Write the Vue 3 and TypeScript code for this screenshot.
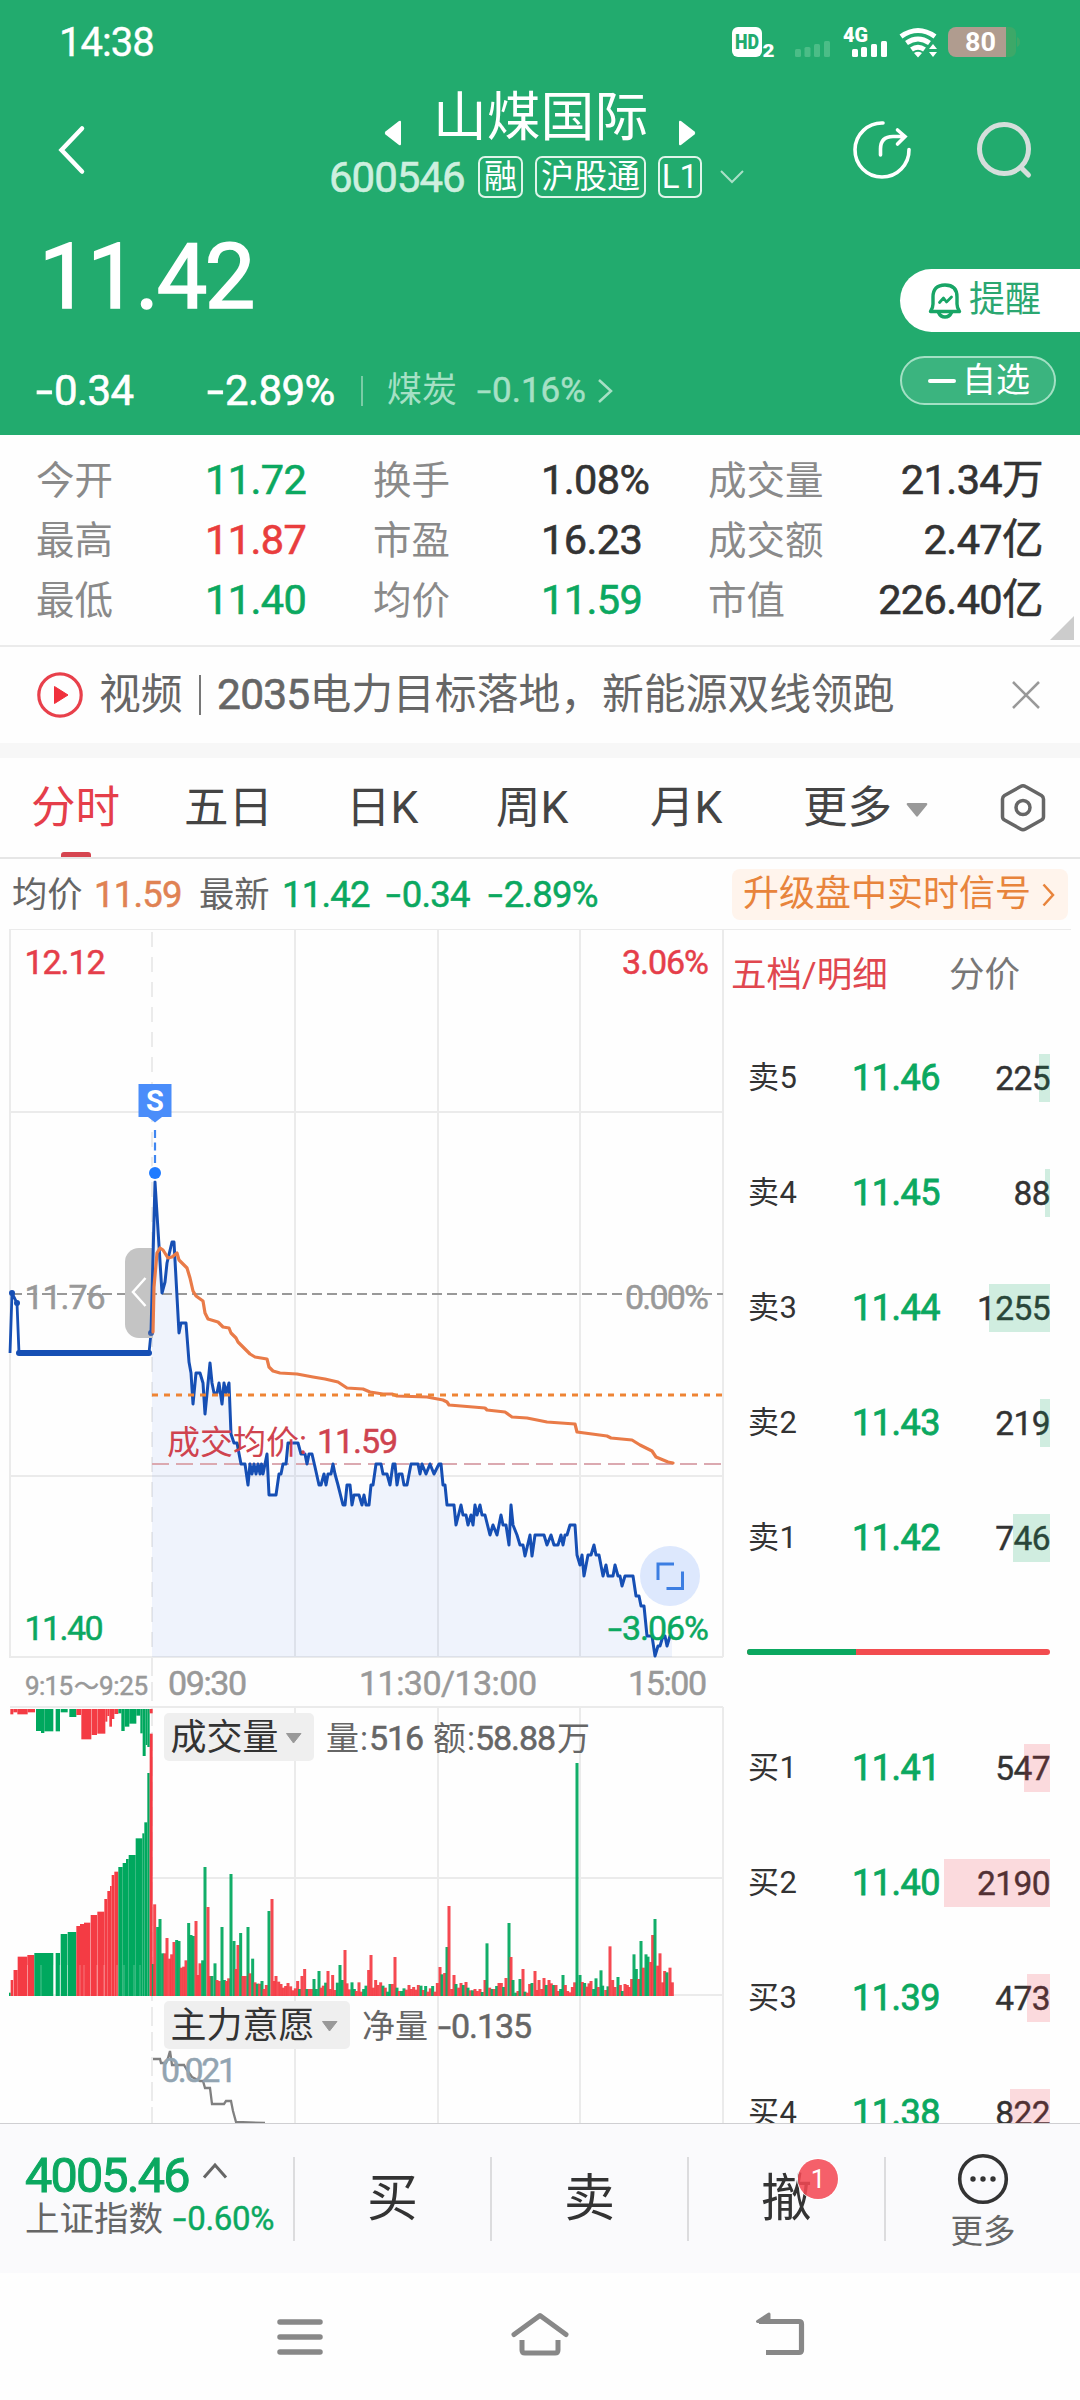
<script setup lang="ts">
import { h } from 'vue'

interface Level { name: string; price: string; volume: number; bar: number }
type Bar = { x: number; top: number; color: string }

const GREEN = '#00a85e'
const RED = '#f43b44'

// Numeric text: the minus sign is drawn wider than the font's own hyphen.
const Num = (props: { v: string }) =>
  h('span', { class: 'num' }, props.v.startsWith('-') ? [h('i', { class: 'neg' }, '-'), props.v.slice(1)] : props.v)
Num.props = ['v']

const stats = [
  [['今开', '11.72', 'down'], ['换手', '1.08%', ''], ['成交量', '21.34万', '']],
  [['最高', '11.87', 'up'], ['市盈', '16.23', ''], ['成交额', '2.47亿', '']],
  [['最低', '11.40', 'down'], ['均价', '11.59', 'down'], ['市值', '226.40亿', '']],
]

const tabs = ['分时', '五日', '日K', '周K', '月K']

const asks: Level[] = [
  { name: '卖5', price: '11.46', volume: 225, bar: 11 },
  { name: '卖4', price: '11.45', volume: 88, bar: 5 },
  { name: '卖3', price: '11.44', volume: 1255, bar: 61 },
  { name: '卖2', price: '11.43', volume: 219, bar: 10 },
  { name: '卖1', price: '11.42', volume: 746, bar: 37 },
]
const bids: Level[] = [
  { name: '买1', price: '11.41', volume: 547, bar: 26 },
  { name: '买2', price: '11.40', volume: 2190, bar: 106 },
  { name: '买3', price: '11.39', volume: 473, bar: 23 },
  { name: '买4', price: '11.38', volume: 822, bar: 40 },
]

const pricePts =
  '151,1333 155,1182 158,1230 162,1293 165,1282 167,1263 172,1242 174,1242 179,1333 181,1323 186,1323 189,1362 191,1373 193,1404 196,1373 200,1373 203,1383 205,1414 210,1363 212,1383 214,1393 217,1393 219,1383 222,1404 224,1383 226,1393 229,1383 231,1434 234,1443 237,1443 241,1464 245,1464 248,1485 250,1464 252,1474 254,1464 256,1474 258,1464 260,1474 261.5,1464 263,1474 265,1464 267,1454 269,1495 276,1495 279,1474 281,1474 283,1464 286,1464 288,1443 298,1443 301,1454 305,1454 307,1464 309,1454 312,1454 315,1467 319,1485 321,1485 324,1474 326,1485 328,1474 331,1474 333,1464 335,1474 338,1485 343,1505 345,1505 347,1485 350,1485 352,1505 354,1495 359,1495 362,1505 364,1495 366,1505 369,1505 371,1485 373,1485 376,1464 381,1464 383,1474 387,1474 390,1485 393,1464 395,1464 397,1485 399,1474 402,1474 404,1485 407,1485 411,1464 418,1464 420,1474 422,1464 426,1474 430,1464 434,1474 439,1464 441,1464 443,1485 445,1485 447,1505 454,1505 456,1525 461,1505 463,1515 466,1515 468,1525 471,1515 473,1525 475,1505 477,1515 480,1505 482,1515 485,1515 490,1535 493,1525 497,1535 501,1515 503,1525 506,1525 509,1545 511,1505 513,1525 517,1535 520,1545 523,1545 525,1556 530,1535 532,1556 535,1535 544,1535 547,1545 551,1535 554,1545 558,1545 561,1535 563,1545 565,1535 567,1535 570,1525 575,1525 577,1555 580,1565 582,1555 584,1576 588,1555 591,1555 594,1545 596,1555 599,1555 603,1576 606,1565 608,1576 613,1576 615,1565 618,1576 620,1576 622,1586 625,1576 633,1576 636,1596 639,1596 641,1606 644,1606 647,1636 652,1636 655,1656 658,1646 660,1646 663,1636 665,1636 667,1646 670,1636 672,1636'
const areaPts = `152,1657 ${pricePts.replace('151,1333', '152,1333')} 672,1657`
const auctionPts = '10,1353 12,1293 17,1303 19,1353 149,1353 151,1333'
const avgPts =
  '153,1332 154,1287 157,1253 160,1248 163,1250 168,1258 172,1257 177,1253 179,1260 187,1268 190,1278 193,1291 196,1296 203,1301 205,1313 208,1319 218,1322 223,1327 229,1328 231,1333 236,1338 238,1342 250,1354 255,1357 267,1359 269,1367 273,1371 280,1373 297,1374 313,1377 325,1379 338,1382 347,1388 363,1389 370,1392 383,1394 392,1394 397,1396 427,1397 443,1400 447,1402 449,1405 485,1408 487,1410 505,1412 512,1417 527,1418 547,1422 575,1424 577,1432 607,1436 611,1438 632,1440 640,1445 652,1451 656,1457 668,1462 673,1463'
const willPts =
  '153,2059 160,2059 161,2063 166,2063 168,2058 170,2051 172,2065 184,2065 187,2070 192,2077 200,2081 203,2081 205,2088 210,2088 212,2104 224,2104 226,2101 231,2101 233,2111 236,2122 265,2123'

const parseBars = (src: string): Bar[] =>
  src.split(' ').map((item) => {
    const [x, top] = item.slice(1).split(',').map(Number)
    return { x: x / 3, top: 1690 + top / 3, color: item[0] === 'g' ? GREEN : RED }
  })

// Per-minute volume: colour flag, offset and bar top, in thirds of a pixel.
const volume = parseBars(
  'g460,822 r464,643 g473,711 g480,687 g488,790 r495,790 r501,744 r509,806 r515,793 r522,756 g530,750 g537,753 r544,833 r551,830 r558,811 g566,699 g573,735 g580,738 r588,693 r594,855 r600,820 g608,811 g615,531 r624,651 r630,858 g636,858 g645,820 r651,870 r658,873 g666,711 g673,870 r680,873 r686,865 g693,552 g702,753 r708,837 r714,765 g722,729 r729,858 r736,858 g744,711 r750,850 g758,806 r765,877 g772,881 r779,881 g786,873 r792,897 r799,885 g807,663 r816,627 r823,873 r828,858 r836,875 r843,882 r850,893 r857,888 r864,879 r872,889 r879,901 r886,895 r893,873 g899,897 r906,858 r914,837 g921,897 r928,897 r935,897 g942,867 g949,897 g957,843 r963,893 r970,887 g977,878 r984,843 r991,897 r998,855 r1005,900 g1012,878 g1020,825 g1027,870 r1035,780 r1041,880 r1048,898 g1056,877 g1063,897 r1069,903 r1077,877 r1084,905 g1091,897 g1098,887 r1106,840 r1113,795 r1120,893 r1127,870 r1134,885 r1142,877 g1149,887 r1156,893 g1163,905 g1170,882 r1177,882 r1185,801 g1191,893 r1198,903 g1205,903 g1212,895 r1219,899 r1227,885 r1234,897 r1241,891 r1248,899 r1255,885 g1263,887 r1270,900 g1277,888 r1284,905 r1291,895 g1298,888 r1305,905 r1312,879 r1320,831 g1326,853 r1334,849 g1341,771 r1347,648 r1355,897 r1362,855 g1368,882 r1376,893 r1383,879 g1390,885 r1398,876 g1404,893 r1411,901 g1418,901 r1425,897 r1432,903 r1440,897 g1447,906 r1455,870 g1461,760 r1469,893 g1476,897 r1483,897 g1490,888 r1497,879 r1504,879 g1511,891 r1518,864 g1527,699 r1533,801 g1539,870 g1547,908 r1554,903 g1560,867 r1569,837 g1575,905 r1582,908 r1589,882 g1596,879 r1605,843 r1611,900 r1617,870 r1625,897 r1632,864 g1639,885 r1647,870 r1654,880 g1661,885 r1668,885 r1675,903 g1682,897 g1689,855 r1696,885 r1703,903 r1710,907 r1717,891 r1724,877 g1731,219 g1740,855 r1747,876 g1754,879 r1761,890 r1767,880 r1773,873 g1781,897 g1788,865 r1795,891 g1803,841 g1808,887 r1817,900 g1824,889 r1830,769 r1838,870 r1845,891 g1854,861 r1861,885 g1867,903 r1875,882 r1882,885 r1888,891 r1895,867 g1902,793 g1909,837 r1916,867 g1923,753 r1930,833 g1938,793 g1944,800 r1952,816 r1958,735 g1965,687 r1973,827 r1980,790 r1988,877 r1994,843 g2001,847 r2010,833 r2017,877',
)

// Auction matched volume: [colour flag, left, right, top] in thirds of a pixel.
const matched: [string, number, number, number][] = [
  ['g', 27, 32, 908], ['r', 32, 40, 870], ['r', 40, 53, 840], ['r', 53, 82, 800], ['r', 82, 103, 795],
  ['g', 103, 160, 789], ['g', 167, 180, 789], ['g', 182, 202, 732], ['g', 203, 229, 726],
  ['r', 229, 240, 708], ['r', 240, 252, 702], ['r', 252, 271, 698], ['r', 272, 291, 675], ['r', 292, 313, 665],
  ['r', 313, 322, 627], ['r', 322, 330, 603], ['r', 330, 335, 588], ['r', 335, 343, 555], ['r', 343, 355, 545],
  ['g', 355, 368, 531], ['g', 368, 378, 519], ['g', 378, 386, 507], ['g', 386, 407, 495], ['g', 407, 427, 445],
  ['g', 427, 433, 430], ['g', 433, 442, 397], ['g', 442, 449, 249], ['r', 449, 458, 131],
]
// Auction unmatched volume hanging from the pane's top edge.
const unmatched: [string, number, number, number][] = [
  ['r', 31, 40, 73], ['r', 40, 52, 67], ['r', 52, 83, 73], ['r', 83, 105, 67],
  ['g', 108, 123, 123], ['g', 123, 133, 129], ['g', 133, 160, 124], ['g', 167, 180, 124], ['g', 182, 203, 67], ['g', 208, 229, 81],
  ['r', 229, 243, 75], ['r', 244, 274, 148], ['r', 275, 291, 135], ['r', 292, 316, 131], ['r', 316, 322, 95], ['r', 322, 328, 78],
  ['r', 328, 336, 110], ['r', 336, 343, 87], ['r', 343, 355, 72],
  ['g', 355, 364, 70], ['g', 364, 374, 123], ['g', 374, 388, 110], ['g', 388, 409, 101], ['g', 409, 421, 77],
  ['g', 421, 428, 130], ['g', 428, 437, 198], ['g', 437, 442, 165], ['g', 442, 449, 171], ['r', 449, 458, 70],
]
const flagColor = (f: string) => (f === 'g' ? GREEN : RED)
</script>

<template>
  <div class="page">
    <header class="head">
      <div class="status">
        <span class="clock">14:38</span>
        <svg class="status-icons" width="300" height="40" viewBox="725 20 300 40">
          <rect x="732" y="27" width="30" height="30" rx="6" fill="#fff" />
          <text x="735" y="49" font-size="20" font-weight="900" fill="#22ab6e" textLength="24" lengthAdjust="spacingAndGlyphs">HD</text>
          <text x="762.500" y="57" font-size="18" font-weight="900" fill="#fff" textLength="12" lengthAdjust="spacingAndGlyphs">2</text>
          <g fill="#4bbd87">
            <rect x="795" y="49" width="6" height="8" rx="1.500" /><rect x="804.500" y="47" width="6" height="10" rx="1.500" />
            <rect x="814" y="44" width="6" height="13" rx="1.500" /><rect x="824" y="41" width="6" height="16" rx="1.500" />
          </g>
          <text x="843" y="42" font-size="20" font-weight="900" fill="#fff" textLength="25" lengthAdjust="spacingAndGlyphs">4G</text>
          <g fill="#fff">
            <rect x="852" y="49" width="6" height="8" rx="1.500" /><rect x="861" y="47" width="6" height="10" rx="1.500" />
            <rect x="871" y="44" width="6" height="13" rx="1.500" /><rect x="881" y="41" width="6" height="16" rx="1.500" />
          </g>
          <g fill="none" stroke="#fff" stroke-width="5">
            <path d="M901 36.500 Q918 24.500 935 36.500" /><path d="M906.500 43 Q918 35 929.500 43" /><path d="M911.500 49.500 Q918 45 924.500 49.500" />
          </g>
          <path d="M914 53 Q918 50.500 922 53 L918 57.500Z M933 44l4 5h-8Z M933 57l4-5h-8Z" fill="#fff" />
          <path d="M1006 27h4a6 6 0 0 1 6 6v18a6 6 0 0 1-6 6h-4Z M1017 37q3 1 3 5t-3 5Z" fill="#3da868" />
          <path d="M1006 27h-50a8 8 0 0 0-8 8v14a8 8 0 0 0 8 8h50Z" fill="#b09c8f" />
          <text x="965" y="51" font-size="26" font-weight="700" fill="#fff" textLength="31" lengthAdjust="spacingAndGlyphs">80</text>
        </svg>
      </div>

      <div class="navbar">
        <svg class="back" width="30" height="56" viewBox="56 122 30 56"><path d="M82 128.500 61.500 150 82 171.500" fill="none" stroke="#fff" stroke-width="4.500" stroke-linecap="round" /></svg>
        <div class="heading">
          <div class="title-row">
            <svg width="18" height="26" viewBox="0 0 18 26"><path d="M1.500 11.500 15 1q2-1 2 1v22q0 2-2 1L1.500 14.500q-1.500-1.500 0-3Z" fill="#fff" /></svg>
            <h1>山煤国际</h1>
            <svg width="18" height="26" viewBox="0 0 18 26"><path d="M16.500 11.500 3 1Q1 0 1 2v22q0 2 2 1l13.500-10.500q1.500-1.500 0-3Z" fill="#fff" /></svg>
          </div>
          <div class="code-row">
            <span class="code">600546</span>
            <span class="tag rong">融</span><span class="tag hgt">沪股通</span><span class="tag l1">L1</span>
            <svg width="26" height="16" viewBox="0 0 26 16"><path d="M2 2 13 13 24 2" fill="none" stroke="#a9e0c7" stroke-width="2" /></svg>
          </div>
        </div>
        <svg class="share" width="64" height="64" viewBox="849 118 64 64" fill="none" stroke="#fff" stroke-width="3.600" stroke-linecap="round">
          <path d="M882 123A27 27 0 1 0 908 149.500" /><path d="M879.500 155v-6q0-12.500 12.500-12.500H903M896.500 130l7.500 6.500L896.500 144" />
        </svg>
        <svg class="search" width="64" height="64" viewBox="973 118 64 64" fill="none" stroke="#d5dedb" stroke-width="5" stroke-linecap="round">
          <circle cx="1003" cy="149" r="24.500" /><path d="M1021 168.500l6.500 6.500" />
        </svg>
      </div>

      <div class="quote">
        <div class="quote-main">
          <div class="price">11.42</div>
          <div class="change">
            <Num class="c1" v="-0.34" /><Num class="c2" v="-2.89%" />
            <i class="bar" />
            <span class="sector">煤炭</span><Num class="c3" v="-0.16%" />
            <svg width="16" height="26" viewBox="0 0 16 26"><path d="M2 2 14 13 2 24" fill="none" stroke="#a6e0c5" stroke-width="2.500" /></svg>
          </div>
        </div>
        <div class="actions">
          <div class="remind">
            <svg width="34" height="36" viewBox="0 0 34 36" fill="none" stroke="#18a566" stroke-width="3.400" stroke-linejoin="round" stroke-linecap="round">
              <path d="M2.500 28.500Q5 25 5 21V14Q5 2 17 2T29 14v7q0 4 2.500 7.500Z" /><path d="M10.500 29.500q2 4.500 6.500 4.500t6.500-4.500" /><path d="M11.500 19.500l4-4.500 3 4 5-5" stroke-width="2.800" />
            </svg>
            <span>提醒</span>
          </div>
          <div class="watch"><i /><span>自选</span></div>
        </div>
      </div>
    </header>

    <section class="stats">
      <div v-for="(row, i) in stats" :key="i" class="stat-row">
        <div v-for="(cell, j) in row" :key="j" class="stat" :class="`s${j}`">
          <span class="label">{{ cell[0] }}</span><span class="value" :class="cell[2]">{{ cell[1] }}</span>
        </div>
      </div>
      <i class="corner" />
    </section>

    <section class="news">
      <svg width="46" height="46" viewBox="0 0 46 46"><circle cx="23" cy="23" r="21.200" fill="none" stroke="#e8404b" stroke-width="3.200" /><path d="M17.500 14.500 31 23 17.500 31.500Z" fill="#f0303c" stroke="#f0303c" stroke-linejoin="round" /></svg>
      <span class="news-text">视频</span><i class="bar" /><span class="news-text"><b>2035</b>电力目标落地，新能源双线领跑</span>
      <svg class="close" width="28" height="28" viewBox="0 0 28 28"><path d="M1 1l26 26M27 1 1 27" stroke="#999" stroke-width="2.500" /></svg>
    </section>

    <nav class="tabs">
      <span v-for="(t, i) in tabs" :key="t" class="tab" :class="[`t${i}`, { active: i === 0 }]">{{ t }}</span>
      <span class="tab t5">更多</span>
      <svg class="drop" width="22" height="14" viewBox="0 0 22 14"><path d="M2 0h18q2 0 1 2l-9 11q-1 1.500-2 0L1 2Q0 0 2 0Z" fill="#999" /></svg>
      <svg class="gear" width="46" height="50" viewBox="0 0 46 50" fill="none" stroke="#666" stroke-width="3.500" stroke-linejoin="round"><path d="M20.500 3.500q2.500-1.500 5 0l16 9q2 1.300 2 3.500v17.500q0 2.500-2 3.500l-16 9q-2.500 1.500-5 0l-16-9q-2-1-2-3.500V16q0-2.200 2-3.500Z" /><circle cx="23" cy="24.500" r="7" /></svg>
    </nav>

    <section class="summary">
      <span class="txt a">均价</span><Num class="b" v="11.59" />
      <span class="txt c">最新</span><Num class="d" v="11.42" /><Num class="e" v="-0.34" /><Num class="f" v="-2.89%" />
      <div class="upgrade"><span>升级盘中实时信号</span><svg width="13" height="24" viewBox="0 0 13 24"><path d="M1.500 1.500 11 12 1.500 22.500" fill="none" stroke="#e8843c" stroke-width="2.500" /></svg></div>
    </section>

    <main class="board">
      <svg class="chart" width="727" height="1194" viewBox="0 929 727 1194">
        <g stroke="#ebebeb" stroke-width="2" fill="none">
          <path d="M9 929H727M10 929V1658M10 1112H723M10 1476H723M10 1657H723M295 929V1657M438 929V1657M580 929V1657M723 929V1657" />
          <path d="M10 1707H723M152 1878H723M10 1995H723M295 1707V2123M438 1707V2123M580 1707V2123M723 1707V2123" />
          <path d="M152 932V1657" stroke-dasharray="15 10" />
          <path d="M152 1657V2123" stroke-dasharray="19 6" />
        </g>

        <polygon :points="areaPts" fill="#1e5fe0" fill-opacity=".065" />
        <path d="M12 1294H723" stroke="#999" stroke-width="2" stroke-dasharray="10 5" />
        <path d="M152 1464H723" stroke="#dba9b0" stroke-width="2" stroke-dasharray="17 7" />
        <polyline :points="auctionPts" fill="none" stroke="#164fb4" stroke-width="2.800" />
        <path d="M19 1353H149" stroke="#164fb4" stroke-width="6" stroke-linecap="round" />
        <circle cx="12" cy="1293" r="3" fill="#164fb4" /><circle cx="17" cy="1303" r="3" fill="#164fb4" />
        <path d="M153 1248h-14a14 14 0 0 0-14 14v62a14 14 0 0 0 14 14h14Z" fill="#c4c4c4" />
        <path d="M145.500 1278 133 1292 145.500 1306" fill="none" stroke="#fff" stroke-width="2.500" />
        <circle cx="151" cy="1333" r="3" fill="#3f62a8" />
        <polyline :points="pricePts" fill="none" stroke="#164fb4" stroke-width="3" stroke-linejoin="round" />
        <polyline :points="avgPts" fill="none" stroke="#e97b48" stroke-width="3.200" stroke-linejoin="round" stroke-linecap="round" />
        <path d="M152 1395H723" stroke="#ee8434" stroke-width="2.800" stroke-dasharray="6 6" />

        <path d="M155 1130V1168" stroke="#3f86f0" stroke-width="2.200" stroke-dasharray="8 4.500" />
        <circle cx="155" cy="1173" r="7.500" fill="#fff" /><circle cx="155" cy="1173" r="6" fill="#1f7bff" />
        <path d="M138.500 1084H171.500V1117H162L155 1122.500 148 1117H138.500Z" fill="#4a8dfa" />
        <text x="155" y="1111" text-anchor="middle" font-size="29" font-weight="700" fill="#fff">S</text>

        <circle cx="670" cy="1576" r="30" fill="#dde8fd" />
        <path d="M674 1564H658V1580M666.500 1588.500H682.500V1571.500" fill="none" stroke="#3c7ee2" stroke-width="3" />

        <g font-size="34" class="fig">
          <text x="24.500" y="974" style="--c: #e53e4a" textLength="81">12.12</text>
          <text x="622" y="974" style="--c: #e53e4a" textLength="87">3.06%</text>
          <text x="24.500" y="1309" style="--c: #999" textLength="81">11.76</text><text x="625" y="1309" style="--c: #999" textLength="84">0.00%</text>
          <text x="24.500" y="1640" style="--c: #0ba860" textLength="79">11.40</text>
          <text x="608" y="1640" style="--c: #0ba860" textLength="14" lengthAdjust="spacingAndGlyphs">-</text><text x="622" y="1640" style="--c: #0ba860" textLength="87">3.06%</text>
          <text x="25" y="1695" font-size="26" style="--c: #999" textLength="48">9:15</text><text x="74" y="1695" font-size="25" style="--c: #999">～</text><text x="99" y="1695" font-size="26" style="--c: #999" textLength="49">9:25</text>
          <text x="168" y="1695" style="--c: #999" textLength="79">09:30</text><text x="359" y="1695" style="--c: #999" textLength="178">11:30/13:00</text><text x="628" y="1695" style="--c: #999" textLength="79">15:00</text>
          <text x="317" y="1453" style="--c: #cf434f" textLength="81">11.59</text>
        </g>
        <text x="167" y="1454" font-size="33" fill="#cf434f" textLength="140">成交均价:</text>

        <rect v-for="(b, i) in matched" :key="`m${i}`" :x="b[1] / 3" :y="1690 + b[3] / 3" :width="(b[2] - b[1]) / 3" :height="(918 - b[3]) / 3" :fill="flagColor(b[0])" />
        <rect v-for="(b, i) in unmatched" :key="`u${i}`" :x="b[1] / 3" y="1709" :width="(b[2] - b[1]) / 3" :height="(b[3] - 57) / 3" :fill="flagColor(b[0])" />
        <path v-for="x in [13.5, 27.5, 41, 54, 60, 67.5, 80, 84, 97, 104, 117, 124, 134, 140]" :key="`l${x}`" :d="`M${x} 1965V1996`" stroke="#fff" stroke-opacity=".3" />
        <rect v-for="(b, i) in volume" :key="`v${i}`" :x="b.x - 1.5" :y="b.top" width="3" :height="1996 - b.top" :fill="b.color" fill-opacity=".93" />

        <g fill="#efefef"><rect x="164" y="1713" width="150" height="48" rx="5" /><rect x="164" y="2001" width="186" height="48" rx="5" /></g>
        <g fill="#333" font-size="36"><text x="170.500" y="1750">成交量</text><text x="170.500" y="2038">主力意愿</text></g>
        <path d="M286.500 1733.500h14.500L293.500 1743ZM322.500 2021.500H337L329.500 2031Z" fill="#999" stroke="#999" stroke-linejoin="round" />
        <g fill="#666" font-size="33">
          <text x="326" y="1750" textLength="42">量:</text><text x="433" y="1750" textLength="42">额:</text><text x="557" y="1750">万</text><text x="362" y="2038">净量</text>
        </g>
        <g font-size="34" class="fig" style="--c: #666">
          <text x="369" y="1750" textLength="55">516</text><text x="475" y="1750" textLength="81">58.88</text>
          <text x="438" y="2038" textLength="13" lengthAdjust="spacingAndGlyphs">-</text><text x="451" y="2038" textLength="81">0.135</text>
        </g>
        <polyline :points="willPts" fill="none" stroke="#808080" stroke-width="2.300" />
        <text class="fig" x="161" y="2082" font-size="34" style="--c: #92a4b1" textLength="76">0.021</text>
      </svg>

      <aside class="book">
        <div class="book-tabs"><span class="on">五档/明细</span><span>分价</span></div>
        <div v-for="l in asks" :key="l.name" class="level ask">
          <span class="who">{{ l.name }}</span><span class="at">{{ l.price }}</span>
          <span class="vol">{{ l.volume }}<i :style="{ width: `${l.bar}px` }" /></span>
        </div>
        <div class="ratio"><div><i /></div></div>
        <div v-for="l in bids" :key="l.name" class="level bid">
          <span class="who">{{ l.name }}</span><span class="at">{{ l.price }}</span>
          <span class="vol">{{ l.volume }}<i :style="{ width: `${l.bar}px` }" /></span>
        </div>
      </aside>
    </main>

    <footer class="dock">
      <div class="index">
        <div class="index-top"><span class="index-value">4005.46</span><svg width="26" height="18" viewBox="0 0 26 18"><path d="M2 15.500 13 3l11 12.500" fill="none" stroke="#666" stroke-width="3" /></svg></div>
        <div class="index-sub"><span>上证指数</span><Num v="-0.60%" /></div>
      </div>
      <div class="act">买</div>
      <div class="act">卖</div>
      <div class="act"><span class="cancel">撤<i class="badge">1</i></span></div>
      <div class="more">
        <svg width="52" height="52" viewBox="0 0 52 52"><circle cx="26" cy="26" r="23.300" fill="none" stroke="#333" stroke-width="3.600" /><g fill="#333"><circle cx="16" cy="26" r="2.700" /><circle cx="26" cy="26" r="2.700" /><circle cx="36" cy="26" r="2.700" /></g></svg>
        <span>更多</span>
      </div>
    </footer>

    <div class="sysnav">
      <svg width="48" height="40" viewBox="0 0 48 40" fill="none" stroke="#888"><path d="M4 5H44M4 20H44M4 35H44" stroke-linecap="round" stroke-width="5.500" /></svg>
      <svg width="60" height="46" viewBox="510 2312 60 46" fill="none" stroke="#888" stroke-width="5" stroke-linejoin="round" stroke-linecap="round"><path d="M514 2334.500 540 2315.500l26 19" /><path d="M522 2340v10q0 3 3 3h30q3 0 3-3v-10" stroke-linecap="butt" /></svg>
      <svg width="50" height="46" viewBox="755 2312 50 46" fill="none" stroke="#888" stroke-width="5.200" stroke-linejoin="round"><path d="M759 2321.500H799q2.500 0 2.500 2.500v26q0 2.500-2.500 2.500H766" /><path d="M757.500 2321.500 769 2314v8Z" fill="#888" stroke-width="3" /></svg>
    </div>
  </div>
</template>

<style>
body { background: #fefefe; }
.num { display: inline-block; white-space: nowrap; -webkit-text-stroke: .014em currentColor; }
.num .neg { display: inline-block; width: .43em; font-style: normal; transform: scaleX(1.45); transform-origin: 0 50%; letter-spacing: 0; }
</style>

<style scoped>
* { box-sizing: border-box; }
.page { width: 1080px; height: 2400px; overflow: hidden; display: flex; flex-direction: column; background: #fefefe; font-family: Roboto, 'Noto Sans CJK SC', sans-serif; color: #333; }
.page > * { flex: none; }
svg { display: block; flex: none; }
i { font-style: normal; }

.head { height: 435px; background: #22ab6e; color: #fff; display: flex; flex-direction: column; }
.status { height: 84px; display: flex; justify-content: space-between; align-items: flex-start; padding: 20px 55px 0 59px; }
.clock { font-size: 40px; line-height: 46px; letter-spacing: -1px; -webkit-text-stroke: .4px currentColor; }
.navbar { height: 126px; display: flex; }
.back { margin: 38px 0 0 56px; }
.heading { margin-left: 243px; width: 420px; }
.title-row { display: flex; height: 64px; padding: 0 0 0 55px; }
.title-row svg { margin-top: 36px; }
h1 { margin: 2px 31px 0 31px; font-size: 53.800px; line-height: 64px; font-weight: 400; width: 214px; white-space: nowrap; }
.code-row { display: flex; height: 42px; margin-top: 8px; align-items: center; }
.code { width: 149px; padding-top: 2px; font-size: 42px; letter-spacing: -1px; color: #cdefdf; line-height: 42px; -webkit-text-stroke: .6px currentColor; }
.tag { height: 42px; border: 2px solid #dff5ea; border-radius: 7px; font-size: 33px; line-height: 38px; text-align: center; white-space: nowrap; }
.rong { width: 45px; }
.hgt { width: 111px; margin-left: 12px; }
.l1 { width: 44px; margin-left: 12px; }
.code-row svg { margin: 0 0 0 17px; }
.share { margin: 34px 0 0 101px; }
.search { margin: 34px 0 0 60px; }

.quote { flex: 1; display: flex; justify-content: space-between; }
.quote-main { padding: 27px 0 0 40px; }
.price { font-size: 90px; line-height: 82px; height: 80px; letter-spacing: -2.400px; -webkit-text-stroke: 1.600px currentColor; margin-left: -1px; }
.change { display: flex; align-items: center; height: 42px; margin-top: 53px; margin-left: -4px; line-height: 42px; }
.c1 { font-size: 42px; width: 171px; letter-spacing: -.6px; }
.c2 { font-size: 42px; width: 154px; letter-spacing: -.6px; }
.change .bar { width: 2px; height: 30px; background: #7acca6; margin-right: 24px; }
.sector { font-size: 35px; color: #a6e0c5; width: 90px; }
.c3 { font-size: 35px; color: #a6e0c5; width: 120px; }
.actions { width: 180px; padding-top: 59px; }
.remind { height: 63px; border-radius: 32px 0 0 32px; background: #fff; color: #2ba771; display: flex; align-items: center; padding-left: 28px; font-size: 36px; line-height: 56px; }
.remind span { margin: -1px 0 0 7px; white-space: nowrap; }
.watch { margin-top: 24px; width: 156px; height: 49px; border: 2px solid #a3e0c4; border-radius: 25px; background: #3bb47f; display: flex; align-items: center; padding-left: 26px; font-size: 34px; line-height: 44px; }
.watch i { width: 28px; height: 4px; border-radius: 2px; background: #fff; margin-right: 6px; }
.watch span { margin-top: -1px; white-space: nowrap; }

.stats { position: relative; height: 212px; padding-top: 15px; border-bottom: 2px solid #ebebeb; }
.stat-row { display: flex; height: 60px; align-items: center; line-height: 60px; white-space: nowrap; }
.stat { display: flex; }
.s0 { width: 373px; padding-left: 36px; }
.s1 { width: 335px; }
.s2 { width: 334px; justify-content: space-between; }
.label { font-size: 38.500px; color: #8a8a8a; position: relative; top: 1px; }
.s0 .label { width: 169px; }
.s1 .label { width: 168px; }
.value { font-size: 41.500px; letter-spacing: -.6px; -webkit-text-stroke: .6px currentColor; }
.s2 .value { margin-right: -1px; }
.value.down { color: #0ba860; }
.value.up { color: #e93d3d; }
.corner { position: absolute; right: 6px; top: 181px; border-left: 24px solid transparent; border-bottom: 24px solid #ccc; }

.news { height: 96px; display: flex; align-items: center; padding: 0 40px 0 37px; color: #666; }
.news-text { font-size: 41.800px; line-height: 60px; white-space: nowrap; margin-left: 16px; margin-top: 0; }
.news-text b { font-weight: 400; font-size: 42.500px; letter-spacing: -.8px; -webkit-text-stroke: .6px currentColor; }
.news .bar { width: 2.500px; height: 40px; background: #777; margin-left: 16px; }
.news .close { margin-left: auto; }

.tabs { height: 116px; border-top: 15px solid #f7f7f7; border-bottom: 2px solid #e6e6e6; display: flex; padding-left: 31px; font-size: 44.500px; line-height: 100px; white-space: nowrap; }
.tab { color: #444; }
.t0 { width: 153px; }
.t1 { width: 162px; }
.t2 { width: 150px; }
.t3 { width: 154px; }
.t4 { width: 153px; }
.t5 { width: 103px; }
.tab.active { position: relative; color: #e53e4a; }
.tab.active::after { content: ''; position: absolute; left: 30px; bottom: 0; width: 30px; height: 5px; border-radius: 3px 3px 0 0; background: #d64550; }
.drop { margin-top: 45px; }
.gear { margin: 25px 0 0 72px; }

.summary { height: 70px; display: flex; align-items: center; padding: 1px 12px 0; line-height: 50px; white-space: nowrap; }
.txt { font-size: 35.300px; color: #666; margin-top: 0; }
.summary .num { font-size: 36.500px; letter-spacing: -.8px; color: #0ba860; }
.a { width: 82px; }
.summary .b { width: 105px; color: #e08253; }
.c { width: 83px; }
.d { width: 104px; }
.e { width: 102px; }
.upgrade { margin-left: auto; width: 336px; height: 51px; border-radius: 8px; background: #fff4ec; color: #e8843c; font-size: 36px; line-height: 49px; display: flex; justify-content: space-between; align-items: center; padding: 0 13px 0 11px; }

.board { height: 1194px; display: flex; }
.chart text { font-family: Roboto, 'Noto Sans CJK SC', sans-serif; }
.fig text, text.fig { fill: var(--c); stroke: var(--c); stroke-width: .5px; }
.status-icons text { font-family: Roboto, sans-serif; }
.book { width: 353px; overflow: hidden; padding: 0 30px 0 20px; }
.book::before { content: ''; display: block; height: 2px; margin: -1px -21px 0 -20px; background: #ebebeb; }
.book-tabs { height: 90px; display: flex; font-size: 35.500px; line-height: 90px; color: #777; margin-left: -16px; white-space: nowrap; }
.book-tabs span { flex: none; width: 218px; }
.book-tabs .on { color: #e0474f; }
.level { height: 115px; display: flex; align-items: center; white-space: nowrap; }
.who { width: 105px; font-size: 31px; line-height: 40px; padding: 1px 0 0 1px; letter-spacing: .5px; }
.at { width: 88px; font-size: 36px; color: #0ba860; letter-spacing: -.5px; -webkit-text-stroke: .8px currentColor; }
.vol { position: relative; flex: 1; height: 48px; font-size: 33.500px; line-height: 49px; letter-spacing: -.6px; text-align: right; -webkit-text-stroke: .4px currentColor; }
.vol i { position: absolute; right: 0; top: 0; height: 48px; }
.ask i { background: rgba(0, 160, 90, .18); }
.bid i { background: rgba(240, 40, 60, .17); }
.ratio { height: 115px; padding-top: 54px; }
.ratio div { height: 6px; border-radius: 3px; background: #f24c4f; overflow: hidden; }
.ratio i { display: block; width: 109px; height: 6px; background: #0ba860; }

.dock { height: 150px; background: #fafafc; border-top: 1px solid #cfcfd2; display: flex; padding-top: 33px; }
.index { width: 295px; height: 84px; border-right: 2px solid #dcdcde; padding-left: 25px; }
.index-top { display: flex; height: 38px; line-height: 38px; }
.index-value { font-size: 48.500px; color: #0ba860; letter-spacing: -1.800px; width: 177px; -webkit-text-stroke: 1px currentColor; }
.index-top svg { margin-top: 5px; }
.index-sub { display: flex; align-items: center; line-height: 40px; font-size: 34.500px; color: #666; margin-top: 4px; white-space: nowrap; }
.index-sub .num { color: #0ba860; font-size: 33px; margin-left: 10px; letter-spacing: -.3px; }
.act { width: 197px; height: 84px; border-right: 2px solid #dcdcde; text-align: center; font-size: 51px; line-height: 84px; }
.cancel { position: relative; display: inline-block; height: 84px; }
.badge { position: absolute; left: 37px; top: 2px; width: 40px; height: 40px; border-radius: 50%; background: rgba(244, 72, 84, .87); box-shadow: 0 0 0 1px #fff; color: #fff; font-size: 26px; line-height: 40px; }
.more { flex: 1; display: flex; flex-direction: column; align-items: center; margin-top: -4px; font-size: 32.500px; line-height: 44px; color: #666; }
.more span { margin-top: 5px; }

.sysnav { height: 127px; display: flex; padding: 39px 0 0 276px; }
.sysnav svg:nth-child(1) { margin-top: 5px; }
.sysnav svg:nth-child(2) { margin-left: 186px; }
.sysnav svg:nth-child(3) { margin-left: 185px; }
</style>
